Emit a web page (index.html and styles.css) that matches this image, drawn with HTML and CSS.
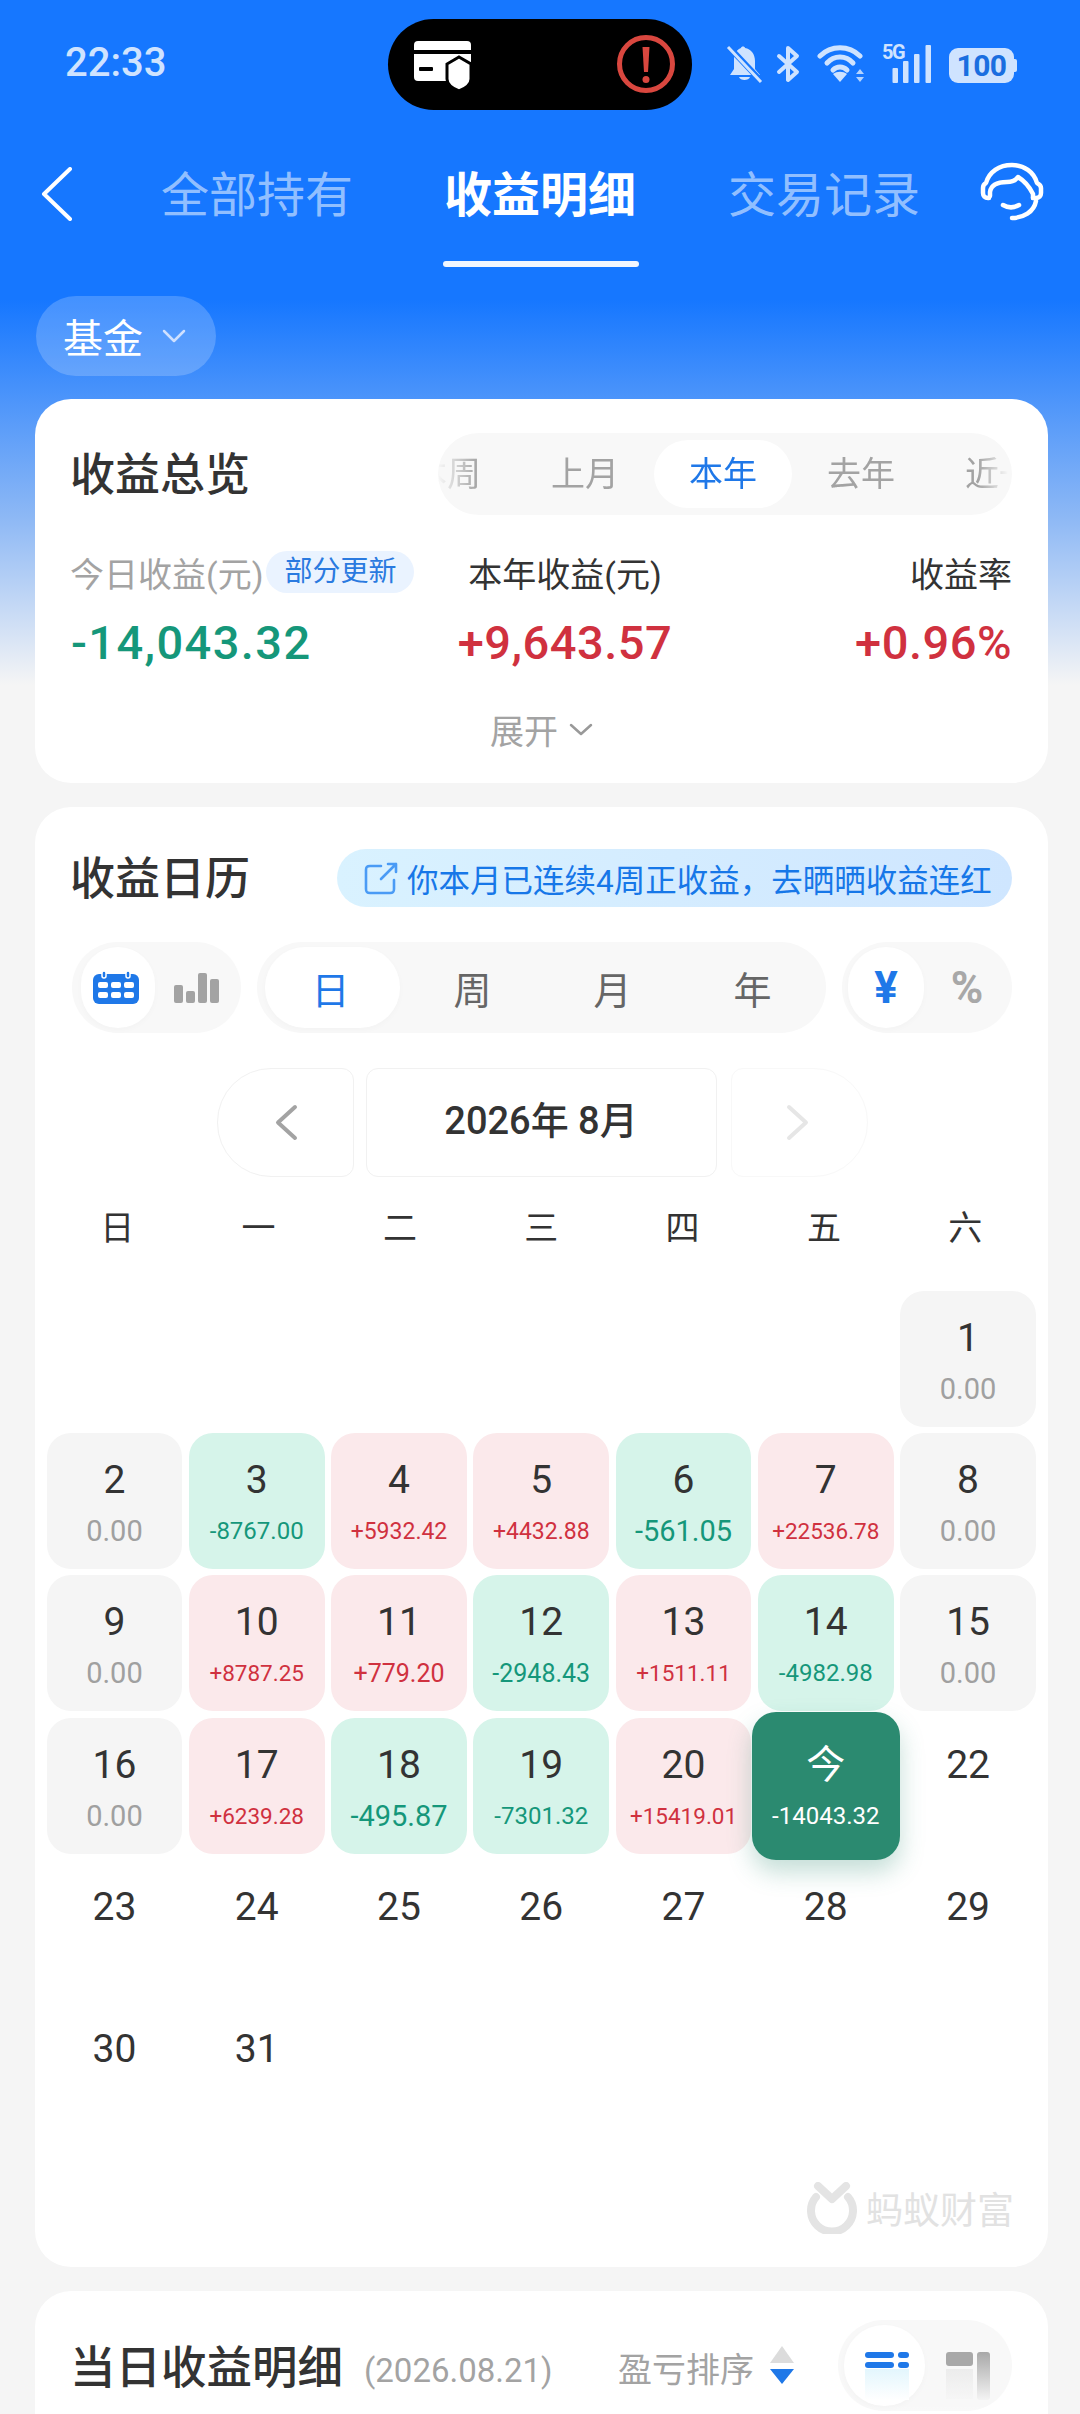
FILE: index.html
```html
<!DOCTYPE html>
<html lang="zh-CN">
<head>
<meta charset="utf-8">
<title>收益明细</title>
<link rel="stylesheet" href="styles.css">
</head>
<body>
<div class="page">
  <header class="status">
    <span class="time">22:33</span>
    <div class="island">
      <svg class="ic-card" width="58" height="51" viewBox="0 0 58 51">
        <rect x="0" y="0" width="57" height="40" rx="4" fill="#fff"/>
        <rect x="0" y="9" width="57" height="4" fill="#000"/>
        <rect x="5" y="26" width="14" height="4" rx="1" fill="#000"/>
        <path d="M45 16 L57 23 V38 C57 44 50 48 45 50 C40 48 33 44 33 38 V23 Z" fill="#fff" stroke="#000" stroke-width="3"/>
      </svg>
      <svg class="ic-alert" width="60" height="60" viewBox="0 0 60 60">
        <circle cx="30" cy="30" r="26.500" fill="none" stroke="#d9473f" stroke-width="5"/>
        <path d="M26.500 13 h7 l-1.500 25 h-4 z" fill="#d9473f"/>
        <circle cx="30" cy="45.500" r="3.500" fill="#d9473f"/>
      </svg>
    </div>
    <div class="sys">
      <svg width="37" height="38" viewBox="0 0 37 38">
        <path d="M19 3 C25 4 29 9 29 16 V24 L34 30 H4 L8 24 V14 C8 8 12 4 15 3 C15 1 19 1 19 3 Z M13 32 H24 C23 36 14 36 13 32 Z" fill="#cfe3ff"/>
        <path d="M2 1 L36 37" stroke="#1677ff" stroke-width="6"/>
        <path d="M2 2 L35 37" stroke="#cfe3ff" stroke-width="3"/>
      </svg>
      <svg class="bt" width="24" height="38" viewBox="0 0 24 38" fill="none" stroke="#cfe3ff" stroke-width="4" stroke-linecap="round" stroke-linejoin="round">
        <path d="M3 11 L21 27 L12 35 V3 L21 11 L3 27"/>
      </svg>
      <svg class="wifi" width="52" height="38" viewBox="0 0 52 38" fill="none" stroke="#cfe3ff" stroke-width="5" stroke-linecap="round">
        <path d="M3 11 C14 0 32 0 43 11"/>
        <path d="M10 18 C17 10 29 10 36 18"/>
        <path d="M16 25 C20 21 26 21 30 25"/>
        <path d="M23 37 L16 29 C20 26 26 26 30 29 Z" fill="#cfe3ff" stroke="none"/>
        <path d="M43 24 L47 29 H39 Z M39 32 H47 L43 37 Z" fill="#cfe3ff" stroke="none" opacity=".85"/>
      </svg>
      <div class="signal">
        <span class="g5">5G</span>
        <svg width="49" height="38" viewBox="0 0 49 38" fill="#cfe3ff">
          <rect x="10.500" y="23" width="5.500" height="15" rx="1"/>
          <rect x="21" y="16" width="5.500" height="22" rx="1"/>
          <rect x="32" y="9" width="5.500" height="29" rx="1"/>
          <rect x="43.500" y="0" width="5.500" height="38" rx="1"/>
        </svg>
      </div>
      <div class="battery">100</div>
    </div>
  </header>

  <nav class="nav">
    <svg class="back" width="32" height="54" viewBox="0 0 32 54" fill="none" stroke="#fff" stroke-width="4" stroke-linecap="round" stroke-linejoin="round"><path d="M29 2 L3 27 L29 52"/></svg>
    <a class="tab tab-one">全部持有</a>
    <a class="tab tab-on">收益明细<i class="bar"></i></a>
    <a class="tab tab-three">交易记录</a>
    <svg class="help" width="70" height="70" viewBox="0 0 70 70" fill="none" stroke="#fff" stroke-width="4.500" stroke-linecap="round" stroke-linejoin="round">
      <path d="M13 40 H12 C9 40 7 38 7 35 V30 C7 27 8 26 10 25 C13 14 23 7 36 7 C48 7 58 14 61 25 C63 26 65 27 65 30 V35 C65 38 63 40 60 40 H57"/>
      <path d="M14 38 V34 C15 27 22 24 31 24 C36 24 40 22 42 19 C47 22 53 28 57 36 V40"/>
      <path d="M27 47 C32 50 38 50 43 47"/>
      <path d="M60 43 C58 54 47 60 36 60"/>
    </svg>
  </nav>

  <div class="chip">基金<svg class="chev" width="24" height="14" viewBox="0 0 24 14" fill="none" stroke="#cfe0ff" stroke-width="2.500" stroke-linecap="round" stroke-linejoin="round"><path d="M2 2 L12 12 L22 2"/></svg></div>

  <section class="card overview">
    <div class="head">
      <h2 class="title">收益总览</h2>
      <div class="strip">
        <div class="strip-in">
          <span class="st">本周</span>
          <span class="st">上月</span>
          <span class="st st-on">本年</span>
          <span class="st">去年</span>
          <span class="st">近一年</span>
        </div>
      </div>
    </div>
    <div class="metrics">
      <div class="lab lab-first"><span class="muted">今日收益(元)</span><span class="badge">部分更新</span></div>
      <div class="lab lab-mid">本年收益(元)</div>
      <div class="lab lab-end">收益率</div>
      <div class="num down">-14,043.32</div>
      <div class="num up lab-mid">+9,643.57</div>
      <div class="num up lab-end">+0.96%</div>
    </div>
    <div class="more">展开<svg width="24" height="13" viewBox="0 0 24 13" fill="none" stroke="#999" stroke-width="2.500" stroke-linecap="round" stroke-linejoin="round"><path d="M2 2 L12 11 L22 2"/></svg></div>
  </section>

  <section class="card calendar">
    <div class="head head-cal">
      <h2 class="title">收益日历</h2>
      <div class="promo">
        <svg width="34" height="33" viewBox="0 0 34 33" fill="none" stroke="#4a9bf5" stroke-width="2.600" stroke-linecap="round" stroke-linejoin="round"><path d="M17 4 H6 C3 4 2 5 2 8 V27 C2 30 3 31 6 31 H26 C29 31 30 30 30 27 V18"/><path d="M17 17 L32 2 M24 2 H32 V10"/></svg>
        <span>你本月已连续4周正收益，去晒晒收益连红</span>
      </div>
    </div>
    <div class="toggles">
      <div class="seg seg-icons">
        <span class="sg sg-on sg-cal"><svg width="46" height="33" viewBox="0 0 46 33"><rect y="3" width="46" height="30" rx="6" fill="#1f78e8"/><rect x="9" y="0" width="4" height="7" rx="2" fill="#1f78e8" stroke="#fff" stroke-width="1.500"/><rect x="33" y="0" width="4" height="7" rx="2" fill="#1f78e8" stroke="#fff" stroke-width="1.500"/><g fill="#fff"><rect x="5" y="11" width="10" height="6" rx="2"/><rect x="18" y="11" width="10" height="6" rx="2"/><rect x="31" y="11" width="10" height="6" rx="2"/><rect x="5" y="21" width="10" height="6" rx="2"/><rect x="18" y="21" width="10" height="6" rx="2"/><rect x="31" y="21" width="10" height="6" rx="2"/></g></svg></span>
        <span class="sg"><svg width="45" height="30" viewBox="0 0 45 30" fill="#a3a3a3"><rect y="12" width="9" height="18" rx="2"/><rect x="12" y="18" width="9" height="12" rx="2"/><rect x="24" y="0" width="9" height="30" rx="2"/><rect x="36" y="6" width="9" height="24" rx="2"/></svg></span>
      </div>
      <div class="seg seg-text">
        <span class="sg sg-on sg-blue">日</span>
        <span class="sg">周</span>
        <span class="sg">月</span>
        <span class="sg">年</span>
      </div>
      <div class="seg seg-unit">
        <span class="sg sg-on unit-on">¥</span>
        <span class="sg unit">%</span>
      </div>
    </div>
    <div class="month">
      <div class="mbtn mbtn-prev"><svg width="24" height="37" viewBox="0 0 24 37" fill="none" stroke="#a3a3a3" stroke-width="4" stroke-linecap="round" stroke-linejoin="round"><path d="M21 3 L4 18.500 L21 34"/></svg></div>
      <div class="mlabel">2026年 8月</div>
      <div class="mbtn mbtn-next"><svg width="24" height="37" viewBox="0 0 24 37" fill="none" stroke="#e6e6e6" stroke-width="4" stroke-linecap="round" stroke-linejoin="round"><path d="M3 3 L20 18.500 L3 34"/></svg></div>
    </div>
    <div class="weekdays">
      <span>日</span><span>一</span><span>二</span><span>三</span><span>四</span><span>五</span><span>六</span>
    </div>
    <div class="days">
      <div class="day blank"></div><div class="day blank"></div><div class="day blank"></div><div class="day blank"></div><div class="day blank"></div><div class="day blank"></div>
      <div class="day flat"><b>1</b><em>0.00</em></div>

      <div class="day flat"><b>2</b><em>0.00</em></div>
      <div class="day loss"><b>3</b><em class="s24">-8767.00</em></div>
      <div class="day gain"><b>4</b><em class="s23">+5932.42</em></div>
      <div class="day gain"><b>5</b><em class="s23">+4432.88</em></div>
      <div class="day loss"><b>6</b><em class="s29">-561.05</em></div>
      <div class="day gain"><b>7</b><em class="s22">+22536.78</em></div>
      <div class="day flat"><b>8</b><em>0.00</em></div>

      <div class="day flat"><b>9</b><em>0.00</em></div>
      <div class="day gain"><b>10</b><em class="s22">+8787.25</em></div>
      <div class="day gain"><b>11</b><em class="s25">+779.20</em></div>
      <div class="day loss"><b>12</b><em class="s25">-2948.43</em></div>
      <div class="day gain"><b>13</b><em class="s22">+1511.11</em></div>
      <div class="day loss"><b>14</b><em class="s24">-4982.98</em></div>
      <div class="day flat"><b>15</b><em>0.00</em></div>

      <div class="day flat"><b>16</b><em>0.00</em></div>
      <div class="day gain"><b>17</b><em class="s22">+6239.28</em></div>
      <div class="day loss"><b>18</b><em class="s29">-495.87</em></div>
      <div class="day loss"><b>19</b><em class="s24">-7301.32</em></div>
      <div class="day gain"><b>20</b><em class="s22">+15419.01</em></div>
      <div class="day today"><b>今</b><em class="s24">-14043.32</em></div>
      <div class="day"><b>22</b></div>

      <div class="day"><b>23</b></div><div class="day"><b>24</b></div><div class="day"><b>25</b></div><div class="day"><b>26</b></div><div class="day"><b>27</b></div><div class="day"><b>28</b></div><div class="day"><b>29</b></div>
      <div class="day"><b>30</b></div><div class="day"><b>31</b></div>
    </div>
    <div class="brand">
      <svg width="50" height="52" viewBox="0 0 50 52" fill="none" stroke="#e4e4e4" stroke-width="8" stroke-linecap="round"><path d="M11 4 L25 17 L39 4" stroke-linejoin="round"/><path d="M9 15 A21 21 0 1 0 41 15"/></svg>
      <span>蚂蚁财富</span>
    </div>
  </section>

  <section class="card detail">
    <div class="head head-detail">
      <h2 class="title title-wide">当日收益明细</h2>
      <span class="date">(2026.08.21)</span>
      <span class="sort">盈亏排序</span>
      <svg class="sort-ic" width="26" height="38" viewBox="0 0 26 38"><path d="M13 0 L25 17 H1 Z" fill="#dcdcdc"/><path d="M1 23 H25 L13 38 Z" fill="#1f78e8"/></svg>
      <div class="seg seg-list">
        <span class="sg sg-on sg-list"><svg width="44" height="48" viewBox="0 0 44 48"><defs><linearGradient id="tint" x1="0" y1="0" x2="0" y2="1"><stop offset="0" stop-color="#e3f6fd"/><stop offset="1" stop-color="#fff"/></linearGradient></defs><rect y="17" width="44" height="31" fill="url(#tint)"/><g fill="#1f78e8"><rect y="0" width="29" height="6" rx="3"/><rect x="33" y="0" width="11" height="6" rx="3"/><rect y="10" width="29" height="6" rx="3"/><rect x="33" y="10" width="11" height="6" rx="3"/></g></svg></span>
        <span class="sg"><svg width="44" height="48" viewBox="0 0 44 48"><defs><linearGradient id="gh" x1="0" y1="0" x2="0" y2="1"><stop offset="0" stop-color="#a8a8a8"/><stop offset="1" stop-color="#f4f4f4"/></linearGradient><linearGradient id="gh2" x1="0" y1="0" x2="0" y2="1"><stop offset="0" stop-color="#ececec"/><stop offset="1" stop-color="#f6f6f6"/></linearGradient></defs><rect y="0" width="27" height="14" rx="3" fill="#a8a8a8"/><rect y="17" width="27" height="30" fill="url(#gh2)"/><rect x="31" y="0" width="13" height="48" rx="3" fill="url(#gh)"/></svg></span>
      </div>
    </div>
    <div class="fade"></div>
  </section>
</div>
</body>
</html>
```

FILE: styles.css
```css
* { box-sizing: border-box; }
html, body { margin: 0; padding: 0; }
body {
  width: 1080px;
  height: 2414px;
  overflow: hidden;
  font-family: Roboto, "Noto Sans CJK SC", sans-serif;
  color: #333;
}
.page {
  width: 1080px;
  height: 2414px;
  overflow: hidden;
  background: linear-gradient(180deg, #1677ff 0, #1677ff 300px, #8db8f5 517px, #f5f5f5 685px, #f5f5f5 100%);
}

/* status bar */
.status { display: flex; align-items: flex-start; height: 130px; padding: 19px 0 0 65px; }
.time { width: 323px; margin-top: 21px; font-size: 40px; line-height: 46px; font-weight: 500; color: #cfe3ff; }
.island { display: flex; justify-content: space-between; align-items: center; width: 304px; height: 91px; padding: 0 16px 0 26px; background: #000; border-radius: 46px; }
.ic-card { margin-top: 4px; }
.ic-alert { margin-top: -1px; }
.sys { display: flex; align-items: center; margin: 26px 0 0 34px; height: 38px; }
.bt { margin-left: 13px; }
.wifi { margin-left: 17px; }
.signal { position: relative; margin-left: 13px; width: 49px; height: 38px; }
.g5 { position: absolute; left: 0; top: -3px; font-size: 20px; line-height: 20px; font-weight: 700; letter-spacing: -1.500px; color: #cfe3ff; }
.battery { position: relative; margin: 3px 0 0 18px; width: 65px; height: 35px; border-radius: 9px; background: #cfe3ff; color: #1a6ee0; font-size: 30px; line-height: 35px; font-weight: 700; text-align: center; letter-spacing: -.5px; }
.battery::after { content: ""; position: absolute; right: -3px; top: 11px; width: 3px; height: 13px; border-radius: 0 2px 2px 0; background: #cfe3ff; }

/* nav */
.nav { display: flex; align-items: flex-start; height: 137px; padding: 42px 0 0 41px; }
.back { margin-top: -5px; }
.tab { position: relative; display: block; font-size: 48px; line-height: 48px; white-space: nowrap; color: rgba(255,255,255,.55); }
.tab-one { margin-left: 88px; }
.tab-on { margin-left: 91px; color: #fff; font-weight: 700; }
.tab-three { margin-left: 92px; }
.bar { position: absolute; left: -1px; right: -3px; top: 89px; height: 6px; border-radius: 3px; background: #f2f7ff; }
.help { margin: -14px 0 0 56px; }

/* filter chip */
.chip { display: flex; align-items: center; width: 180px; height: 80px; margin: 29px 0 0 36px; padding-left: 27px; border-radius: 40px; background: rgba(255,255,255,.2); color: #fff; font-size: 40px; }
.chev { margin-left: 19px; }

/* cards */
.card { margin: 23px 32px 0 35px; background: #fff; border-radius: 36px; padding: 0 36px; }
.head { display: flex; align-items: center; justify-content: space-between; }
.title { margin: 3px 0 0 -1px; font-size: 45px; line-height: 60px; font-weight: 500; color: #333; white-space: nowrap; }

/* overview */
.overview { height: 384px; padding-top: 34px; }
.overview .head { height: 82px; }
.strip { width: 574px; height: 82px; border-radius: 41px; background: #f8f8f8; overflow: hidden; }
.strip-in { display: flex; margin-left: -60px; width: 760px; padding-top: 7px; -webkit-mask-image: linear-gradient(90deg, transparent 60px, #000 100px, #000 600px, transparent 630px); mask-image: linear-gradient(90deg, transparent 60px, #000 100px, #000 600px, transparent 630px); }
.st { flex: 0 0 auto; width: 138px; height: 68px; padding: 0 35px; font-size: 34px; line-height: 68px; text-align: center; white-space: nowrap; color: #a3a3a3; }
.st-on { background: #fff; border-radius: 34px; color: #1f78e8; }
.metrics { display: grid; grid-template-columns: 345px 300px 1fr; margin: 36px 0 0 -1px; }
.lab { display: flex; align-items: center; height: 42px; font-size: 34px; color: #333; white-space: nowrap; }
.lab-mid { justify-content: center; text-align: center; }
.lab-end { justify-content: flex-end; text-align: right; }
.muted { color: #a3a3a3; }
.badge { margin-left: 3px; width: 148px; height: 42px; border-radius: 21px; background: #eaf3ff; color: #2a7ae0; font-size: 28px; line-height: 42px; text-align: center; flex: none; }
.num { display: flex; height: 60px; margin-top: 20px; font-size: 47px; line-height: 60px; font-weight: 500; letter-spacing: .5px; white-space: nowrap; }
.num.down { letter-spacing: 1.400px; margin-left: 1px; }
.up { color: #d0313f; }
.down { color: #15977a; }
.more { display: flex; align-items: center; justify-content: center; gap: 11px; margin: 36px 0 0 0; height: 40px; font-size: 34px; color: #a3a3a3; }

/* calendar */
.calendar { margin-top: 24px; height: 1460px; padding: 42px 36px 0 37px; }
.head-cal { height: 58px; }
.calendar .title { margin-left: -2px; }
.promo { display: flex; align-items: center; gap: 9px; width: 675px; height: 58px; padding-left: 27px; border-radius: 29px; background: linear-gradient(90deg, #d9f2ff, #cfe6ff); color: #1677e8; font-size: 31.500px; white-space: nowrap; }
.toggles { display: flex; gap: 16px; margin-top: 35px; }
.seg { display: flex; height: 91px; border-radius: 46px; background: #f8f8f8; padding: 5px 0 5px 9px; }
.seg-icons { width: 169px; gap: 4px; }
.seg-text { width: 569px; padding-left: 8px; }
.seg-unit { width: 170px; padding-left: 6px; gap: 6px; }
.sg { display: flex; align-items: center; justify-content: center; width: 74px; height: 81px; font-size: 38px; color: #666; }
.seg-text .sg { width: 140px; padding-right: 5px; }
.seg-unit .sg { width: 76px; }
.sg-on { background: #fff; border-radius: 40px; box-shadow: 0 2px 6px rgba(0,0,0,.025); }
.sg-cal { padding-right: 4px; }
.seg-text .sg-blue { color: #1f78e8; width: 135px; margin-right: 5px; padding-right: 4px; }
.unit-on { color: #1f78e8; font-size: 44px; font-weight: 700; }
.unit { color: #a8a8a8; font-size: 44px; font-weight: 700; padding-right: 2px; }
.month { display: flex; justify-content: center; margin-top: 35px; height: 109px; }
.mbtn { display: flex; align-items: center; justify-content: center; width: 137px; border: 1.500px solid #f1f1f1; }
.mbtn-prev { border-radius: 54px 12px 12px 54px; padding-left: 2px; }
.mbtn-next { border-radius: 12px 54px 54px 12px; border-color: #f8f8f8; margin-left: 14px; padding-right: 2px; }
.mlabel { width: 351px; margin-left: 12px; border: 1.500px solid #f1f1f1; border-radius: 12px; font-size: 38px; line-height: 105px; font-weight: 500; text-align: center; color: #333; }
.weekdays, .days { display: grid; grid-template-columns: repeat(7, 1fr); margin: 0 -24px 0 -25.500px; }
.weekdays { margin-top: 31px; height: 40px; font-size: 34px; line-height: 40px; text-align: center; color: #333; }
.days { margin-top: 43px; grid-auto-rows: 136px; column-gap: 6.400px; row-gap: 6.200px; }
.day { display: flex; flex-direction: column; align-items: center; padding-top: 27px; border-radius: 24px; }
.day b { font-size: 39px; line-height: 40px; font-weight: 400; color: #333; }
.day em { margin-top: 13px; font-size: 29px; line-height: 37px; font-style: normal; color: #a0a0a0; white-space: nowrap; }
.blank { visibility: hidden; }
.flat { background: #f5f5f5; }
.gain { background: #fbe9eb; }
.loss { background: #d6f4ea; }
.gain em { color: #d0313f; }
.loss em { color: #15977a; }
.day .s29 { font-size: 29px; }
.day .s25 { font-size: 25px; }
.day .s24 { font-size: 24px; }
.day .s23 { font-size: 23px; }
.day .s22 { font-size: 22.500px; }
.today { margin: -6px; padding-top: 33px; background: #2b8a70; box-shadow: 0 12px 24px rgba(43,138,112,.28); position: relative; }
.today b, .today em { color: #fff; }
.brand { display: flex; justify-content: flex-end; align-items: center; gap: 9px; margin: 44px -2px 0 0; height: 52px; font-size: 37px; color: #e2e2e2; white-space: nowrap; }

/* detail */
.detail { position: relative; margin-top: 24px; height: 200px; padding: 29px 36px 0 37px; }
.head-detail { justify-content: flex-start; height: 91px; }
.title-wide { margin: 6px 0 0 -2px; font-size: 45.500px; }
.date { margin: 10px 0 0 21px; font-size: 33px; color: #a3a3a3; white-space: nowrap; }
.sort { margin: 4px 0 0 auto; font-size: 34px; color: #a3a3a3; white-space: nowrap; }
.sort-ic { margin: -2px 0 0 15px; }
.seg-list { width: 174px; margin-left: 43px; padding-left: 6px; gap: 2px; flex: none; }
.seg-list .sg { width: 81px; align-items: flex-start; padding-top: 27px; }
.seg-list .sg-list { padding-left: 5px; }
.fade { position: absolute; left: 0; right: 0; top: 112px; height: 30px; background: linear-gradient(180deg, rgba(255,255,255,0), rgba(255,255,255,.6)); }
```
